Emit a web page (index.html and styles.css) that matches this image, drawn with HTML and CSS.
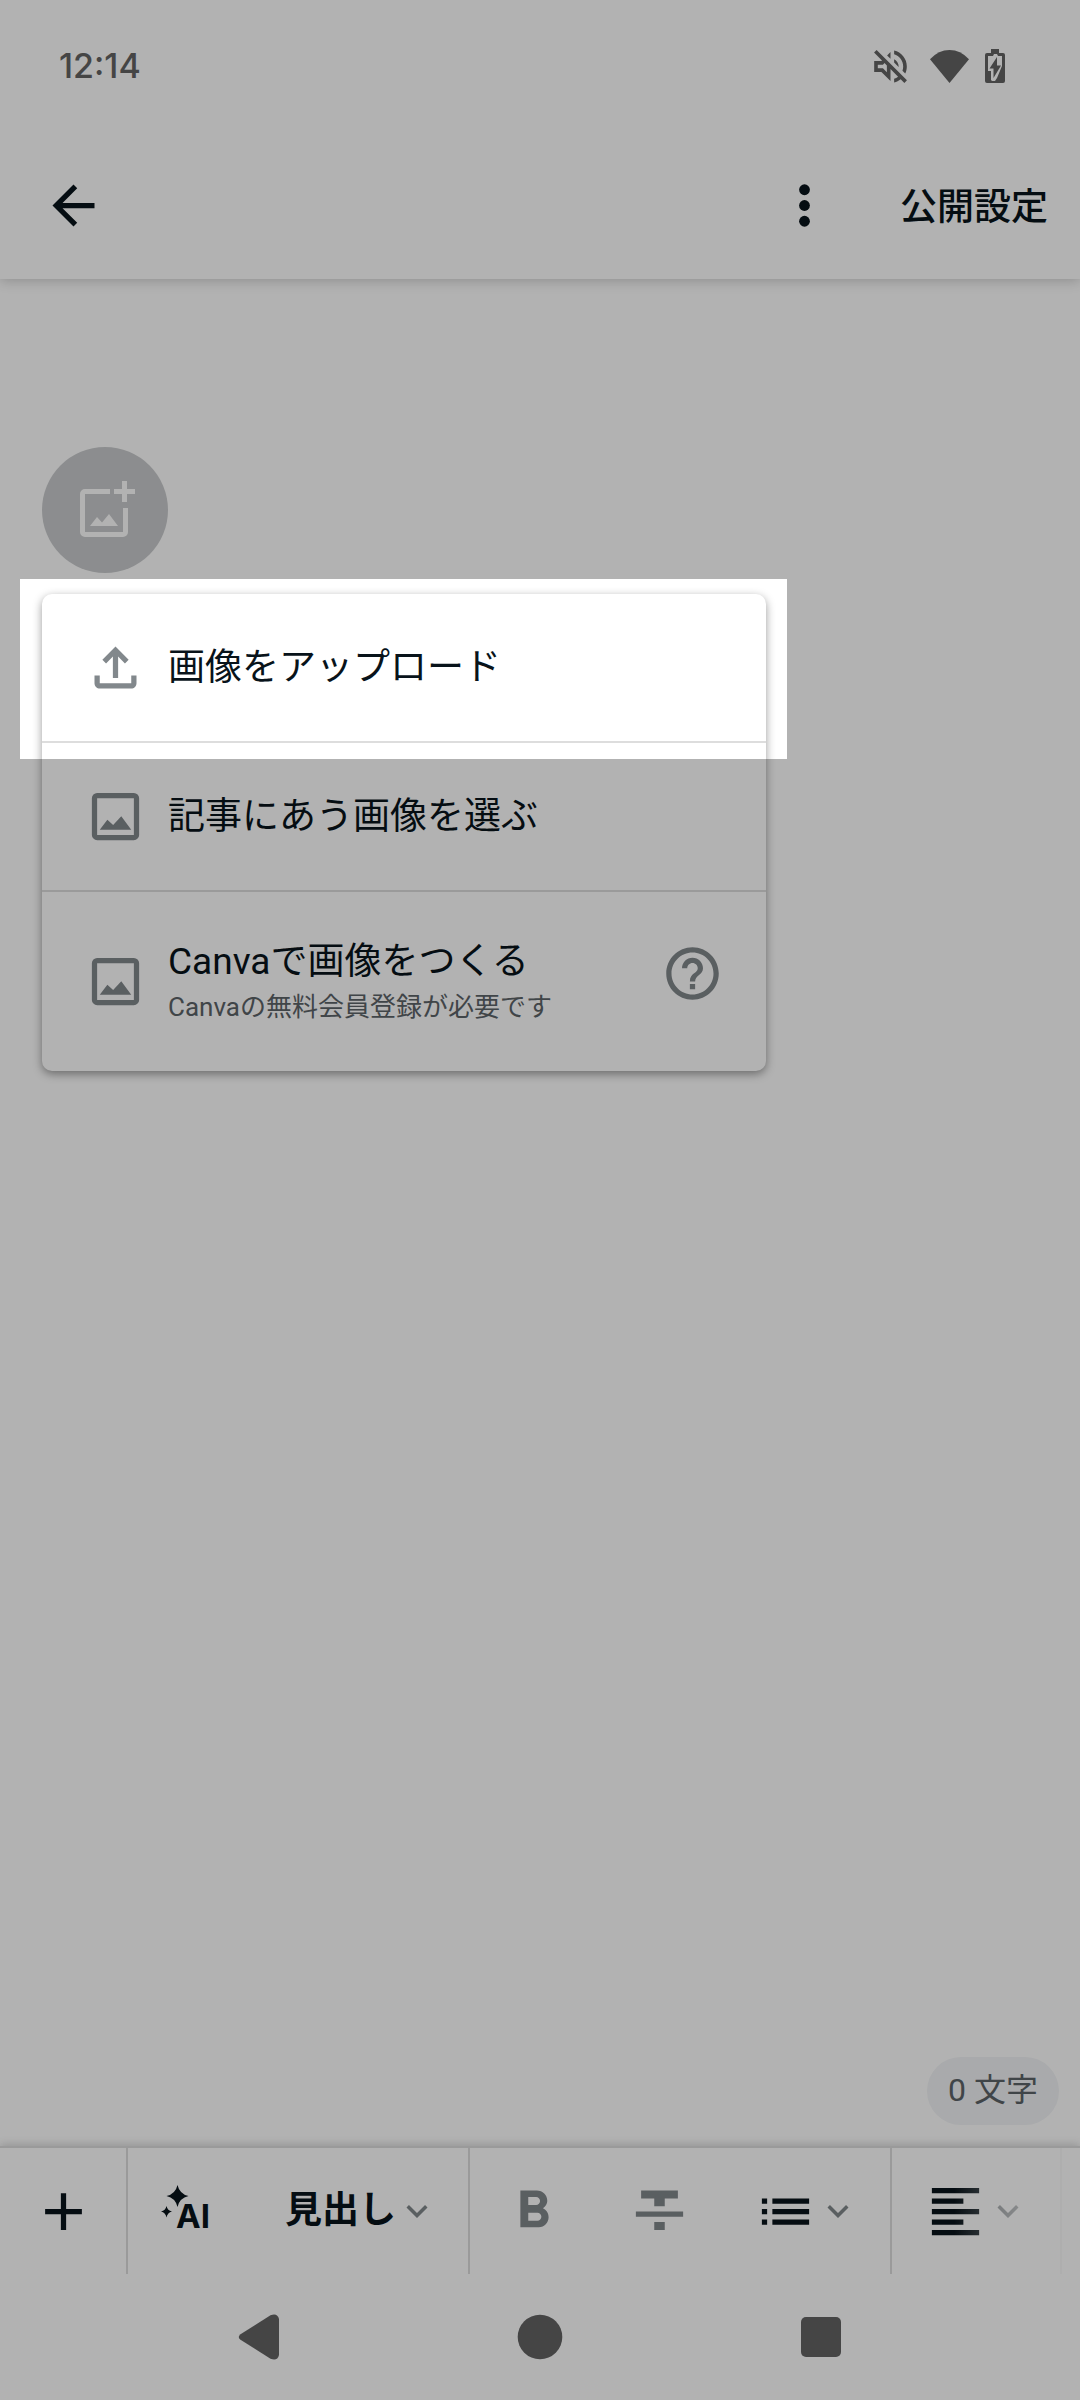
FILE: index.html
```html
<!DOCTYPE html>
<html lang="ja">
<head>
<meta charset="utf-8">
<meta name="viewport" content="width=device-width, initial-scale=1">
<title>記事の編集</title>
<link rel="stylesheet" href="styles.css">
</head>
<body>
<svg class="sprite" aria-hidden="true">
  <symbol id="image" viewBox="0 0 24 24"><path d="M5 21q-.825 0-1.412-.587Q3 19.825 3 19V5q0-.825.587-1.413Q4.175 3 5 3h14q.825 0 1.413.587Q21 4.175 21 5v14q0 .825-.587 1.413Q19.825 21 19 21Zm0-2h14V5H5v14Zm1-2h12l-3.8-5.1-3.1 3.3-2.2-2Z"/></symbol>
  <symbol id="chevron" viewBox="0 0 24 24"><path d="M7.41 8.59 12 13.17l4.59-4.58L18 10l-6 6-6-6z"/></symbol>
</svg>

<header class="top">
  <div class="status">
    <time class="clock">12:14</time>
    <svg class="mute" viewBox="2.9 2.9 18.2 18.2" aria-hidden="true"><path d="M4.34 2.93L2.93 4.34 7.29 8.7 7 9H3v6h4l5 5v-6.59l4.18 4.18c-.65.49-1.38.88-2.18 1.11v2.06c1.34-.3 2.57-.92 3.61-1.75l2.05 2.05 1.41-1.41L4.34 2.93zM10 15.17L7.83 13H5v-2h2.83l.88-.88L10 11.41v3.76zM19 12c0 .82-.15 1.61-.41 2.34l1.53 1.53c.56-1.17.88-2.48.88-3.87 0-4.28-2.99-7.86-7-8.77v2.06c2.89.86 5 3.54 5 6.71zm-7-8l-1.88 1.88L12 7.76zm4.5 8c0-1.77-1.02-3.29-2.5-4.03v1.79l2.48 2.48c.01-.08.02-.16.02-.24z"/></svg>
    <svg class="wifi" viewBox="0 0 39 33" aria-hidden="true"><path d="M19.500 33 0 9.300Q8.500 0 19.500 0T39 9.300Z"/></svg>
    <svg class="battery" viewBox="0 0 20 34" aria-hidden="true"><path d="M6 0h8v4h4a2 2 0 0 1 2 2v26a2 2 0 0 1-2 2H2a2 2 0 0 1-2-2V6a2 2 0 0 1 2-2h4Z"/><path class="battery-empty" d="M3 7h5l1-2h3l1 2h4v10l-5 12-2 3H7l-1-1V22H3Z"/><path d="M12 8 4.500 19.500h4V29L16 16.500h-4Z"/></svg>
  </div>
  <div class="appbar">
    <button class="icon-button" aria-label="戻る"><svg class="icon" viewBox="0 0 24 24"><path d="M20 11H7.830l5.590-5.590L12 4l-8 8 8 8 1.410-1.410L7.830 13H20v-2z"/></svg></button>
    <div class="actions">
      <button class="icon-button" aria-label="メニュー"><svg class="icon" viewBox="0 0 24 24"><circle cx="12" cy="6" r="2.050"/><circle cx="12" cy="12" r="2.050"/><circle cx="12" cy="18" r="2.050"/></svg></button>
      <button class="publish">公開設定</button>
    </div>
  </div>
</header>

<main class="editor">
  <button class="eyecatch" aria-label="見出し画像を追加">
    <svg class="add-image" viewBox="-3 1 56 56"><path d="M30 8H5a5 5 0 0 0-5 5v38a5 5 0 0 0 5 5h38a5 5 0 0 0 5-5V27h-5v24H5V13h25ZM42 0h5v8h8v5h-8v8h-5v-8h-8V8h8ZM10 45h28l-9-12-7 8.500-5-5.500Z"/></svg>
  </button>
  <ul class="menu">
    <li class="row spotlight">
      <button class="choice">
        <svg class="icon muted" viewBox="0 0 24 24"><path d="M11 16V7.850l-2.600 2.600L7 9l5-5 5 5-1.400 1.450-2.600-2.600V16h-2zM6 20c-.55 0-1.020-.2-1.410-.59C4.200 19.020 4 18.550 4 18v-3h2v3h12v-3h2v3c0 .55-.2 1.020-.59 1.410-.39.39-.86.59-1.410.59H6z"/></svg>
        <span class="label">画像をアップロード</span>
      </button>
    </li>
    <li class="row">
      <button class="choice">
        <svg class="icon muted"><use href="#image"/></svg>
        <span class="label">記事にあう画像を選ぶ</span>
      </button>
    </li>
    <li class="row tall">
      <button class="choice">
        <svg class="icon muted"><use href="#image"/></svg>
        <span class="stack">
          <span class="label">Canvaで画像をつくる</span>
          <span class="note">Canvaの無料会員登録が必要です</span>
        </span>
      </button>
      <button class="icon-button help" aria-label="ヘルプ"><svg class="icon muted" viewBox="0 0 24 24"><path d="M11 18h2v-2h-2v2zm1-16C6.480 2 2 6.480 2 12s4.480 10 10 10 10-4.480 10-10S17.520 2 12 2zm0 18c-4.410 0-8-3.590-8-8s3.590-8 8-8 8 3.590 8 8-3.590 8-8 8zm0-14c-2.210 0-4 1.790-4 4h2c0-1.100.9-2 2-2s2 .9 2 2c0 2-3 1.750-3 5h2c0-2.250 3-2.500 3-5 0-2.210-1.790-4-4-4z"/></svg></button>
    </li>
  </ul>
  <p class="count">0 文字</p>
</main>

<footer class="bottom">
  <div class="toolbar" role="toolbar">
    <div class="group"><button class="tool" aria-label="挿入"><svg class="icon" viewBox="0 0 24 24"><path d="M19 13h-6v6h-2v-6H5v-2h6V5h2v6h6v2z"/></svg></button></div>
    <div class="group">
      <button class="tool"><svg class="icon" viewBox="0 0 63 63"><path d="M17.500 5Q19.500 14 28.500 16 19.500 18 17.500 27 15.500 18 6.500 16 15.500 14 17.500 5ZM6.500 26Q7.500 30.500 12 31.500 7.500 32.500 6.500 37.500 5.500 32.500 1 31.500 5.500 30.500 6.500 26Z"/><text class="ai" x="16" y="48">AI</text></svg></button>
      <button class="tool heading">見出し<svg class="chevron muted"><use href="#chevron"/></svg></button>
    </div>
    <div class="group">
      <button class="tool muted" aria-label="太字"><svg class="icon" viewBox="0 0 24 24"><path d="M15.600 10.790c.97-.67 1.650-1.770 1.650-2.790 0-2.260-1.750-4-4-4H7v14h7.040c2.090 0 3.710-1.700 3.710-3.790 0-1.520-.86-2.820-2.150-3.420zM10 6.500h3c.83 0 1.500.67 1.500 1.500s-.67 1.500-1.500 1.500h-3v-3zm3.500 9H10v-3h3.500c.83 0 1.500.67 1.500 1.500s-.67 1.500-1.500 1.500z"/></svg></button>
      <button class="tool muted" aria-label="取り消し線"><svg class="icon" viewBox="0 0 24 24"><path d="M10 19h4v-3h-4v3zM5 4v3h5v3h4V7h5V4H5zM3 14h18v-2H3v2z"/></svg></button>
      <button class="tool" aria-label="リスト"><svg class="icon" viewBox="0 0 24 24"><path d="M3 13h2v-2H3v2zm0 4h2v-2H3v2zm0-8h2V7H3v2zm4 4h14v-2H7v2zm0 4h14v-2H7v2zM7 7v2h14V7H7z"/></svg><svg class="chevron muted"><use href="#chevron"/></svg></button>
    </div>
    <div class="group">
      <button class="tool" aria-label="文章の配置"><svg class="icon" viewBox="0 0 24 24"><path d="M15 15H3v2h12v-2zm0-8H3v2h12V7zM3 13h18v-2H3v2zm0 8h18v-2H3v2zM3 3v2h18V3H3z"/></svg><svg class="chevron muted"><use href="#chevron"/></svg></button>
    </div>
  </div>
  <nav class="system">
    <button class="key" aria-label="戻る"><svg class="glyph" viewBox="0 0 46 46"><path d="M4.500 20.200 34.500 1.200Q41.500-1.500 43 5V41Q41.500 47.500 34.500 44.800L4.500 25.800Q1 23 4.500 20.200Z"/></svg></button>
    <button class="key" aria-label="ホーム"><svg class="glyph" viewBox="0 0 46 46"><circle cx="23" cy="23" r="22.300"/></svg></button>
    <button class="key" aria-label="最近使ったアプリ"><svg class="glyph" viewBox="0 0 46 46"><rect x="3" y="3" width="40" height="40" rx="5"/></svg></button>
  </nav>
</footer>
</body>
</html>
```
FILE: styles.css
```css
:root {
  --ink: #08131a;
  --muted: #82888c;
  --line: #dddddd;
  --system: #636363;
}

* {
  box-sizing: border-box;
}

body {
  display: flex;
  flex-direction: column;
  min-height: 100vh;
  margin: 0;
  background: #fff;
  color: var(--ink);
  font-family: Roboto, "Noto Sans CJK JP", sans-serif;
  font-size: 37px;
  line-height: 56px;
}

button {
  margin: 0;
  padding: 0;
  border: 0;
  background: none;
  color: inherit;
  font: inherit;
  text-align: left;
}

svg {
  display: block;
  flex: none;
  fill: currentColor;
}

.sprite {
  position: absolute;
  width: 0;
  height: 0;
}

.icon,
.icon-button {
  width: 63px;
  height: 63px;
}

.muted {
  color: var(--muted);
}

/* Top bars */

.top {
  box-shadow: 0 2px 12px rgba(0, 0, 0, .2);
}

.status {
  display: flex;
  align-items: center;
  height: 132px;
  padding: 0 75px 0 59px;
  color: var(--system);
}

.clock {
  margin-right: auto;
  font-family: Inter, sans-serif;
  font-size: 34px;
  font-weight: 500;
}

.mute {
  width: 33px;
  height: 33px;
}

.wifi {
  width: 39px;
  height: 33px;
  margin: 0 16px 0 23px;
}

.battery {
  width: 20px;
  height: 34px;
}

.battery-empty {
  fill: #fff;
}

.appbar {
  display: flex;
  align-items: center;
  justify-content: space-between;
  height: 147px;
  padding: 0 32px 0 42px;
}

.actions {
  display: flex;
  align-items: center;
  gap: 64px;
}

.publish {
  padding-top: 5px;
  font-weight: 500;
}

/* Editor */

.editor {
  display: flex;
  flex: 1;
  flex-direction: column;
  align-items: flex-start;
  padding: 168px 21px 21px 42px;
}

.eyecatch {
  display: grid;
  place-items: center;
  width: 126px;
  height: 126px;
  border-radius: 50%;
  background: #c9cbcd;
  color: #fff;
}

.add-image {
  width: 56px;
  height: 56px;
  overflow: visible;
}

.menu {
  width: 100%;
  max-width: 724px;
  margin: 21px 0 0;
  padding: 0;
  border-radius: 10px;
  background: #fff;
  box-shadow: 0 3px 10px rgba(0, 0, 0, .4);
  list-style: none;
}

.row {
  display: flex;
  align-items: center;
  min-height: 149px;
  padding: 0 42px;
  border-bottom: 2px solid var(--line);
}

.row:last-child {
  border-bottom: 0;
}

.tall {
  min-height: 179px;
}

.choice {
  display: flex;
  flex: 1;
  align-items: center;
  gap: 21px;
}

.stack {
  display: flex;
  flex-direction: column;
  padding-bottom: 5px;
}

.note {
  color: #5c6368;
  font-size: 26px;
  line-height: 34px;
}

.help {
  margin-bottom: 16px;
}

/* Dims the whole screen except the highlighted row */
.spotlight {
  position: relative;
}

.spotlight::after {
  content: "";
  position: absolute;
  z-index: 10;
  inset: -15px -21px -18px -22px;
  box-shadow: 0 0 0 3000px rgba(0, 0, 0, .3);
  pointer-events: none;
}

.count {
  margin: auto 0 0 auto;
  padding: 5px 21px 7px;
  border-radius: 34px;
  background: #f2f4f6;
  color: #5c6368;
  font-size: 32px;
}

/* Bottom bars */

.toolbar {
  position: relative;
  display: flex;
  height: 128px;
  border-top: 2px solid var(--line);
  box-shadow: 0 -2px 8px rgba(0, 0, 0, .16);
  clip-path: inset(-20px 0 0);
}

.toolbar::after {
  content: "";
  position: absolute;
  inset: 0 0 0 auto;
  width: 126px;
  background: linear-gradient(to right, rgba(255, 255, 255, 0), #fff);
  pointer-events: none;
}

.group {
  display: flex;
  border-right: 2px solid var(--line);
}

.tool {
  display: flex;
  align-items: center;
  padding: 0 31px 0 32px;
}

.heading {
  padding: 0 30px 0 31px;
  font-weight: 700;
}

.chevron {
  width: 42px;
  height: 42px;
}

.ai {
  font-family: Inter, sans-serif;
  font-size: 33px;
  font-weight: 700;
}

.system {
  display: flex;
  justify-content: center;
  height: 126px;
  color: var(--system);
}

.key {
  display: grid;
  place-items: center;
  width: 26%;
}

.glyph {
  width: 46px;
  height: 46px;
}
```
